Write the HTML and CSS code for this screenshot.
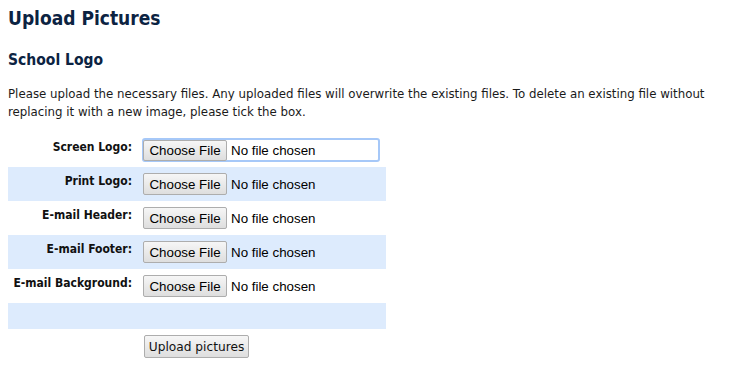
FILE: index.html
```html
<!DOCTYPE html>
<html>
<head>
<meta charset="utf-8">
<link rel="stylesheet" href="styles.css">
</head>
<body>
<h1 class="title">Upload Pictures</h1>
<h2 class="subtitle">School Logo</h2>
<p class="intro">Please upload the necessary files. Any uploaded files will overwrite the existing files. To delete an existing file without replacing it with a new image, please tick the box.</p>
<table class="uploads">
  <tr class="row">
    <td class="label">Screen Logo:</td>
    <td class="field"><span class="file focused"><span class="choose">Choose File</span><span class="none">No file chosen</span></span></td>
  </tr>
  <tr class="row alt">
    <td class="label">Print Logo:</td>
    <td class="field"><span class="file"><span class="choose">Choose File</span><span class="none">No file chosen</span></span></td>
  </tr>
  <tr class="row">
    <td class="label">E-mail Header:</td>
    <td class="field"><span class="file"><span class="choose">Choose File</span><span class="none">No file chosen</span></span></td>
  </tr>
  <tr class="row alt">
    <td class="label">E-mail Footer:</td>
    <td class="field"><span class="file"><span class="choose">Choose File</span><span class="none">No file chosen</span></span></td>
  </tr>
  <tr class="row">
    <td class="label">E-mail Background:</td>
    <td class="field"><span class="file"><span class="choose">Choose File</span><span class="none">No file chosen</span></span></td>
  </tr>
  <tr class="row alt empty">
    <td class="label"></td>
    <td class="field"></td>
  </tr>
  <tr class="submit-row">
    <td class="label"></td>
    <td class="field"><button class="submit" type="button">Upload pictures</button></td>
  </tr>
</table>
</body>
</html>
```
FILE: styles.css
```css
body {
  margin: 8px;
  font-family: "DejaVu Sans Condensed", "DejaVu Sans", sans-serif;
  font-stretch: condensed;
  color: #111;
  background: #fff;
}
.title {
  margin: 0;
  font-size: 19px;
  line-height: 20px;
  font-weight: bold;
  color: #0c2342;
}
.subtitle {
  margin: 0;
  padding-top: 22px;
  font-size: 15.5px;
  line-height: 20px;
  font-weight: bold;
  color: #0c2342;
}
.intro {
  margin: 0;
  padding-top: 15px;
  font-family: "DejaVu Sans", sans-serif;
  font-stretch: normal;
  font-size: 11.8px;
  line-height: 18px;
  color: #1a1a1a;
}
.uploads {
  margin-top: 12px;
  border-collapse: collapse;
  width: 378px;
}
.row td {
  height: 34px;
  padding: 0;
  box-sizing: border-box;
}
.row.alt td {
  background: #ddebfd;
}
.row.empty td {
  height: 26px;
}
.label {
  width: 129px;
  box-sizing: border-box;
  padding: 0 5px 0 0;
  text-align: right;
  vertical-align: top;
  font-weight: bold;
  font-size: 12px;
}
.row .label {
  padding-top: 7px;
  padding-right: 5px;
  line-height: 14px;
}
.field {
  vertical-align: top;
  padding: 0;
}
.row .field {
  padding-top: 5px;
  padding-left: 5px;
}
.file {
  display: flex;
  align-items: center;
  width: 238px;
  height: 24px;
  box-sizing: border-box;
  border: 1px solid transparent;
  font-family: "Liberation Sans", Arial, sans-serif;
  font-stretch: normal;
  font-size: 13.33px;
  color: #000;
}
.file.focused {
  border: 2px solid #a6c8f8;
  border-radius: 3px;
}
.choose {
  display: inline-flex;
  align-items: center;
  justify-content: center;
  width: 84px;
  height: 22px;
  box-sizing: border-box;
  border: 1px solid #adadad;
  border-radius: 2px;
  background: linear-gradient(#f6f6f6, #dedede);
  flex: none;
}
.focused .choose {
  height: 21px;
  margin-left: -1px;
}
.none {
  margin-left: 4px;
}
.submit-row td {
  padding-top: 6px;
}
.submit-row .field {
  padding-left: 7px;
}
.submit {
  width: 105px;
  height: 23px;
  padding: 0;
  border: 1px solid #adadad;
  border-radius: 2px;
  background: linear-gradient(#f6f6f6, #dedede);
  font-family: "DejaVu Sans", sans-serif;
  font-stretch: normal;
  font-size: 12.2px;
  color: #111;
}
```
